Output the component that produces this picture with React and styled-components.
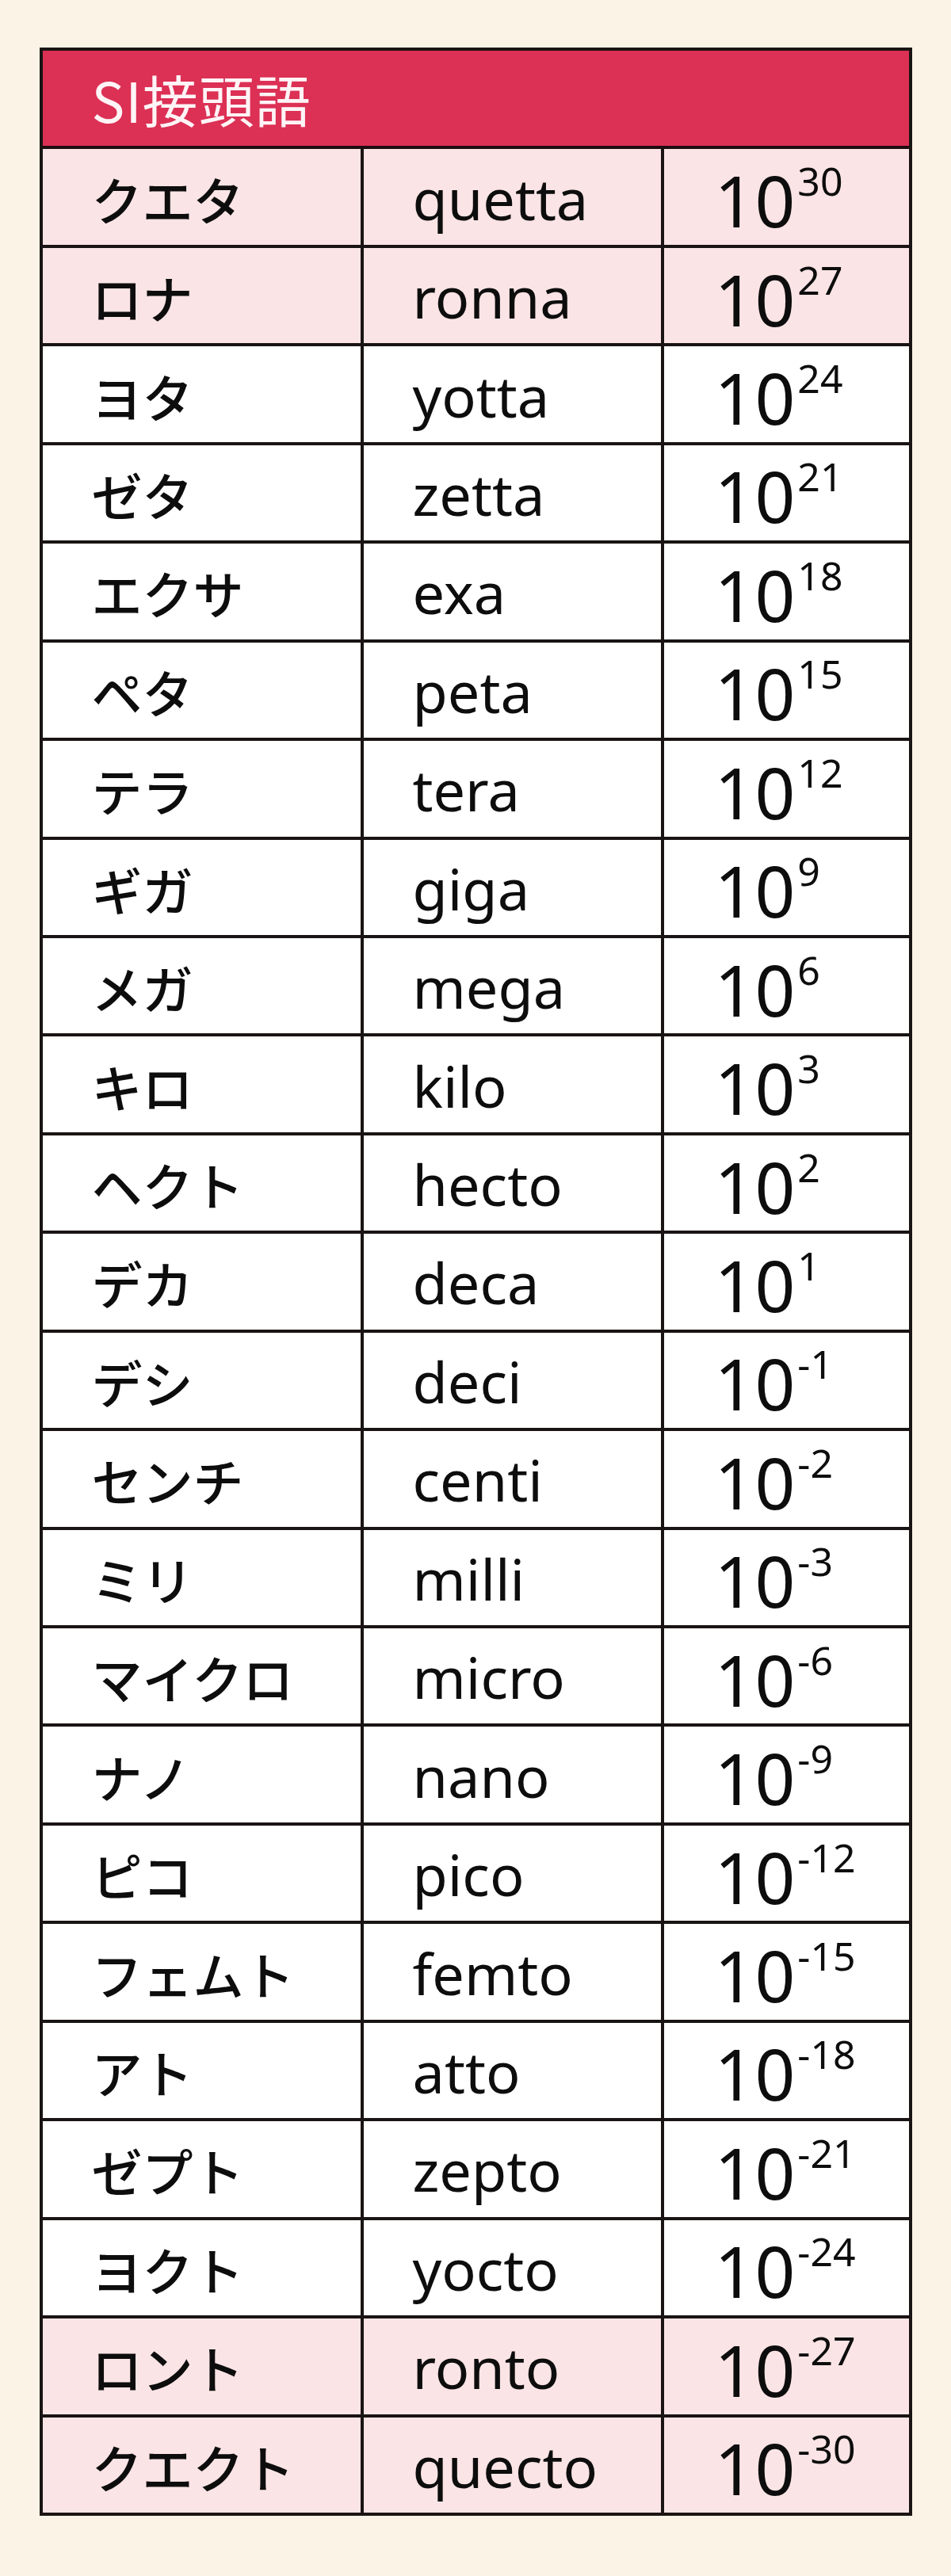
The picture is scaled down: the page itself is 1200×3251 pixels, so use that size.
import React from "react";
import styled, { createGlobalStyle } from "styled-components";

const GlobalStyle = createGlobalStyle`
  html, body {
    margin: 0;
    padding: 0;
    background: #fbf3e5;
  }
  body {
    font-family: "Noto Sans", "Noto Sans CJK JP", sans-serif;
    color: #0d0d0d;
  }
`;

const Page = styled.div`
  min-height: 3251px;
  box-sizing: border-box;
  padding: 60px 0 76px;
  background: #fbf3e5;
`;

const Table = styled.div`
  width: 1101px;
  margin: 0 auto;
  box-sizing: border-box;
  border: 4px solid #1a1414;
  display: flex;
  flex-direction: column;
`;

const Header = styled.div`
  height: 124.44px;
  box-sizing: border-box;
  border-bottom: 4px solid #1f0c10;
  background: #dc3055;
  color: #fff4f6;
  display: flex;
  align-items: center;
  padding: 2px 0 0 62px;
  font-family: "Noto Sans CJK JP", sans-serif;
  font-size: 70px;
  line-height: 1;
  letter-spacing: 1px;
`;

const Row = styled.div`
  display: grid;
  grid-template-columns: 405px 379px 309px;
  height: ${(p) => (p.$last ? "120.44px" : "124.44px")};
  box-sizing: border-box;
  background: ${(p) => (p.$pink ? "#fbe4e5" : "#ffffff")};
  border-bottom: ${(p) => (p.$last ? "none" : "4px solid #1a1414")};
`;

const Cell = styled.div`
  display: flex;
  align-items: center;
  padding-left: 62px;
  box-sizing: border-box;
  border-right: ${(p) => (p.$end ? "none" : "4px solid #1a1414")};
  white-space: nowrap;
  min-width: 0;
`;

const JpCell = styled(Cell)`
  font-family: "Noto Sans CJK JP", sans-serif;
  font-weight: 500;
  font-size: 64px;
  line-height: 1;
  padding-top: 2px;
`;

const EnCell = styled(Cell)`
  font-family: "Noto Sans", sans-serif;
  font-size: 72px;
  line-height: 1;
  padding-top: 2px;
`;

const PowCell = styled(Cell)`
  font-family: "Noto Sans", sans-serif;
  font-size: 89px;
  line-height: 1;
  padding-top: 8px;
  padding-left: 64px;
`;

const Power = styled.span`
  display: inline-block;
  line-height: 1;
`;

const Exp = styled.sup`
  font-size: 50px;
  vertical-align: 40px;
  line-height: 0;
  margin-left: 3px;
`;

const rows = [
  ["クエタ", "quetta", "30"],
  ["ロナ", "ronna", "27"],
  ["ヨタ", "yotta", "24"],
  ["ゼタ", "zetta", "21"],
  ["エクサ", "exa", "18"],
  ["ペタ", "peta", "15"],
  ["テラ", "tera", "12"],
  ["ギガ", "giga", "9"],
  ["メガ", "mega", "6"],
  ["キロ", "kilo", "3"],
  ["ヘクト", "hecto", "2"],
  ["デカ", "deca", "1"],
  ["デシ", "deci", "-1"],
  ["センチ", "centi", "-2"],
  ["ミリ", "milli", "-3"],
  ["マイクロ", "micro", "-6"],
  ["ナノ", "nano", "-9"],
  ["ピコ", "pico", "-12"],
  ["フェムト", "femto", "-15"],
  ["アト", "atto", "-18"],
  ["ゼプト", "zepto", "-21"],
  ["ヨクト", "yocto", "-24"],
  ["ロント", "ronto", "-27"],
  ["クエクト", "quecto", "-30"],
];

export default function App() {
  return (
    <>
      <GlobalStyle />
      <Page>
        <Table>
          <Header>SI接頭語</Header>
          {rows.map(([jp, en, exp], i) => (
            <Row
              key={en}
              $pink={i < 2 || i >= rows.length - 2}
              $last={i === rows.length - 1}
            >
              <JpCell>{jp}</JpCell>
              <EnCell>{en}</EnCell>
              <PowCell $end>
                <Power>
                  10<Exp>{exp}</Exp>
                </Power>
              </PowCell>
            </Row>
          ))}
        </Table>
      </Page>
    </>
  );
}
